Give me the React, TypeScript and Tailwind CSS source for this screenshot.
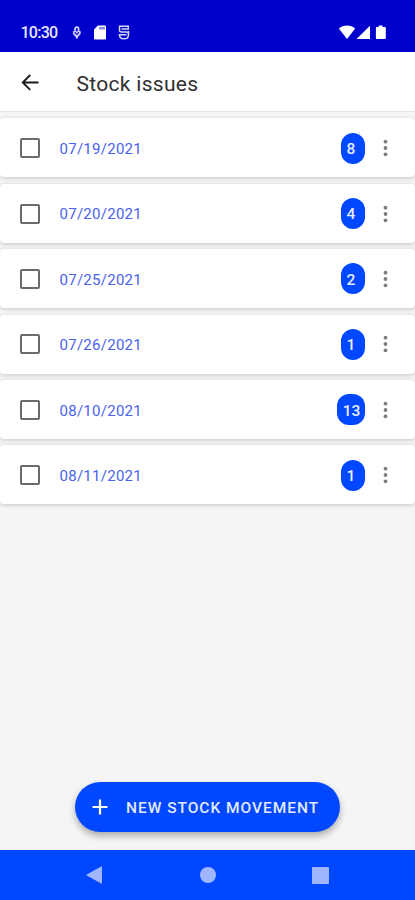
interface StockIssue {
  date: string;
  count: number;
}

const ISSUES: StockIssue[] = [
  { date: '07/19/2021', count: 8 },
  { date: '07/20/2021', count: 4 },
  { date: '07/25/2021', count: 2 },
  { date: '07/26/2021', count: 1 },
  { date: '08/10/2021', count: 13 },
  { date: '08/11/2021', count: 1 },
];

function StatusBar() {
  return (
    <div className="flex h-[52px] shrink-0 items-start bg-[#0000cc] pt-[24px] pr-[28px] pl-[20.5px] text-white">
      <span className="w-[51px] text-[16px] leading-[18px] font-medium tracking-[-0.75px] text-[#e6e6ff]">10:30</span>
      <svg className="mt-[2px]" width="10" height="14" viewBox="0 0 10 14" fill="none" stroke="#d5d5fb">
        <path d="M3 6V3a1.8 1.8 0 0 1 3.6 0v3" strokeWidth="1.7" />
        <path d="M.9 6.3h1.8M7 6.3h1.800M1.500 7.400 4.800 10.600l3.300-3.200" strokeWidth="1.900" />
        <path d="M4.800 5.200v2.300M4.800 10v2.500" strokeWidth="1.900" />
      </svg>
      <svg className="mt-[1px] ml-[12px]" width="12" height="15" viewBox="0 0 12 15">
        <path d="M4 .5h6.7c.7 0 1.3.6 1.3 1.3v11.4c0 .7-.6 1.3-1.3 1.3H1.3C.6 14.5 0 13.900 0 13.200V4.500z" fill="#fff" />
        <path d="M5 3.200h6" stroke="#8b8be8" strokeWidth="2.600" />
      </svg>
      <svg className="mt-[1px] ml-[12px]" width="12" height="15" viewBox="0 0 12 15" fill="none" stroke="#d5d5fb" strokeWidth="1.500">
        <path d="M10.300 3.800V1.300H1.500v3.900c0 1.200.7 1.700 1.900 1.700h5.200c1.200 0 1.900.7 1.900 1.800v1c0 2.400-1.800 4.100-4.500 4.100s-4.500-1.700-4.500-4.100" />
        <path d="M3.500 4.100h7.600M.8 9.700h7.700M10.500 6v3" />
      </svg>
      <svg className="mt-[1px] ml-auto" width="48" height="15" viewBox="0 0 48 15" fill="#fff">
        <path d="M0 3.700C2 1.700 4.800.5 8 .5s6 1.200 8 3.200L8 14z" />
        <path d="M31 .8V14H17.500z" />
        <path d="M39.800.5h3.800V2H46c.5 0 .8.300.8.800v10.400c0 .5-.3.800-.8.800h-8.300c-.5 0-.8-.3-.8-.8V2.800c0-.5.300-.8.800-.8h2.100z" />
      </svg>
    </div>
  );
}

function AppBar() {
  return (
    <header className="flex h-[60px] shrink-0 items-center border-b border-[#e6e6e6] bg-white pl-[21px]">
      <svg width="18" height="18" viewBox="0 0 18 18" fill="none" stroke="#1c1c1c" strokeWidth="1.9">
        <path d="M17.500 9.500H2M9.200 2 1.800 9.500l7.400 7.400" />
      </svg>
      <h1 className="mt-[4px] ml-[37.500px] text-[21px] leading-6 tracking-[0.300px] text-[#303030]">Stock issues</h1>
    </header>
  );
}

function IssueRow({ date, count }: StockIssue) {
  return (
    <li className="flex h-[59px] items-center rounded-[4px] bg-white pr-[27px] pl-[20px] shadow-[0_1px_4px_rgba(0,0,0,0.2)]">
      <span className="mt-[0.6px] size-[20px] rounded-[2px] border-2 border-[#6b6b6b]" />
      <span className="mt-[2.600px] ml-[19.500px] text-[15px] tracking-[0.270px] text-[#4a62ef]">{date}</span>
      <span className="mt-[0.6px] ml-auto flex h-[31px] min-w-[24px] items-center rounded-[12px] bg-[#0048ff] pr-[5px] pl-[5.500px] text-[15.500px] font-medium tracking-[-0.200px] text-[#e8edff]">
        <span className="mt-[3px]">{count}</span>
      </span>
      <svg className="mt-[0.6px] ml-[18px]" width="5" height="18" viewBox="0 0 5 18" fill="#7d7d7d">
        <circle cx="2.500" cy="2.700" r="1.900" />
        <circle cx="2.500" cy="9" r="1.900" />
        <circle cx="2.500" cy="15.300" r="1.900" />
      </svg>
    </li>
  );
}

function NavBar() {
  return (
    <nav className="flex h-[50px] shrink-0 items-center justify-between bg-[#0048ff] pr-[86px] pl-[86px]">
      <svg width="17" height="18" viewBox="0 0 17 18" fill="#9fb5ff">
        <path d="M15.500.8v16.400L.8 9z" stroke="#9fb5ff" strokeLinejoin="round" />
      </svg>
      <span className="size-[16px] rounded-full bg-[#9fb5ff]" />
      <span className="size-[17px] rounded-[1px] bg-[#9fb5ff]" />
    </nav>
  );
}

export default function App() {
  return (
    <div className="flex h-[900px] w-[415px] flex-col overflow-hidden bg-[#f5f5f5] font-['Roboto',sans-serif]">
      <StatusBar />
      <AppBar />
      <main className="flex flex-1 flex-col pt-[6.400px]">
        <ul className="flex flex-col gap-[6.4px]">
          {ISSUES.map((issue) => (
            <IssueRow key={issue.date} {...issue} />
          ))}
        </ul>
        <button className="mt-auto mb-[18px] ml-[75px] flex h-[50px] w-[265px] items-center rounded-full bg-[#0048ff] pl-[17px] text-[#e4eaff] shadow-[0_4px_7px_rgba(0,0,0,0.3)]">
          <svg width="16" height="16" viewBox="0 0 16 16" stroke="#fff" strokeWidth="2.200">
            <path d="M8 .5v15M.5 8h15" />
          </svg>
          <span className="mt-[3px] ml-[18px] text-[15.500px] font-medium tracking-[0.970px] whitespace-nowrap">NEW STOCK MOVEMENT</span>
        </button>
      </main>
      <NavBar />
    </div>
  );
}
